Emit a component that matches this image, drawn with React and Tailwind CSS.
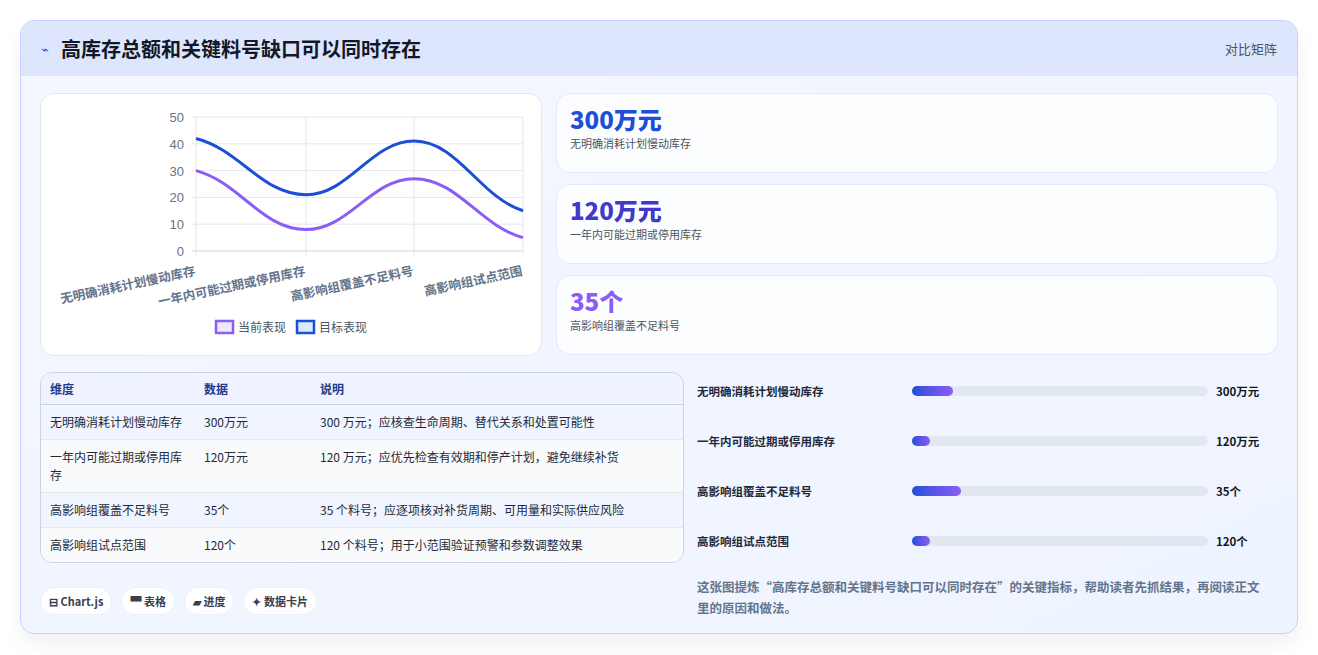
import React from "react";

const F = { fontFamily: '"Noto Sans CJK SC", "Noto Sans", sans-serif' };

function Chart() {
  const xs = [155, 265, 373, 482];
  const y0 = 156, top = 22;
  const yv = (v) => y0 - (v / 50) * (y0 - top);
  const path = (vals) => {
    const p = vals.map((v, i) => [xs[i], yv(v)]);
    let d = `M${p[0][0]},${p[0][1]}`;
    for (let i = 0; i < p.length - 1; i++) {
      const dx = (p[i + 1][0] - p[i][0]) * 0.4;
      const s0 = i === 0 ? (p[1][1] - p[0][1]) / 2 : 0;
      const s1 = i === p.length - 2 ? (p[i + 1][1] - p[i][1]) / 2 : 0;
      d += ` C${p[i][0] + dx},${p[i][1] + s0 * 0.4} ${p[i + 1][0] - dx},${p[i + 1][1] - s1 * 0.4} ${p[i + 1][0]},${p[i + 1][1]}`;
    }
    return d;
  };
  const labels = ["无明确消耗计划慢动库存", "一年内可能过期或停用库存", "高影响组覆盖不足料号", "高影响组试点范围"];
  return (
    <svg width="500" height="260" viewBox="0 0 500 260">
      {[0, 10, 20, 30, 40, 50].map((v) => (
        <g key={v}>
          <line x1={xs[0] - 4} x2={xs[3]} y1={yv(v)} y2={yv(v)} stroke={v === 0 ? "#cbd5e1" : "#e5e7eb"} />
          <text x={xs[0] - 12} y={yv(v) + 5} textAnchor="end" fontSize="13" fill="#6b7280" fontFamily="Liberation Sans, sans-serif">{v}</text>
        </g>
      ))}
      {xs.map((x) => (
        <line key={x} x1={x} x2={x} y1={yv(50)} y2={y0 + 6} stroke="#e5e7eb" />
      ))}
      <path d={path([42, 21, 41, 15])} fill="none" stroke="#1d4ed8" strokeWidth="3" />
      <path d={path([30, 8, 27, 5])} fill="none" stroke="#8b5cf6" strokeWidth="3" />
      {labels.map((l, i) => (
        <text key={i} x={xs[i]} y={y0 + 24} textAnchor="end" fontSize="12.5" fontWeight="600" fill="#64748b" transform={`rotate(-12 ${xs[i]} ${y0 + 24})`} style={F}>{l}</text>
      ))}
      <rect x="175" y="226" width="17" height="12" fill="#ede9fe" stroke="#8b5cf6" strokeWidth="2.5" />
      <text x="197" y="237" fontSize="12" fill="#4b5563" style={F}>当前表现</text>
      <rect x="256" y="226" width="17" height="12" fill="#dbeafe" stroke="#1d4ed8" strokeWidth="2.5" />
      <text x="278" y="237" fontSize="12" fill="#4b5563" style={F}>目标表现</text>
    </svg>
  );
}

const rows = [
  ["无明确消耗计划慢动库存", "300万元", "300 万元；应核查生命周期、替代关系和处置可能性"],
  ["一年内可能过期或停用库存", "120万元", "120 万元；应优先检查有效期和停产计划，避免继续补货"],
  ["高影响组覆盖不足料号", "35个", "35 个料号；应逐项核对补货周期、可用量和实际供应风险"],
  ["高影响组试点范围", "120个", "120 个料号；用于小范围验证预警和参数调整效果"],
];
const bars = [
  ["无明确消耗计划慢动库存", "300万元", 14],
  ["一年内可能过期或停用库存", "120万元", 6],
  ["高影响组覆盖不足料号", "35个", 16.5],
  ["高影响组试点范围", "120个", 6],
];

export default function App() {
  return (
    <div className="w-[1318px] h-[655px] bg-white pt-5 px-5" style={F}>
      <div className="w-[1278px] h-[614px] rounded-[14px] border border-[#c7d2fe] bg-gradient-to-br from-[#f5f7ff] to-[#eef4ff] overflow-hidden shadow-[0_10px_20px_rgba(0,0,0,0.06)]">
        <div className="h-[55px] bg-[#dde6fd] flex items-center justify-between px-5">
          <div className="flex items-center gap-3">
            <span className="text-[#2563eb] text-[13px]">⌁</span>
            <span className="text-[20px] font-bold text-[#111827]">高库存总额和关键料号缺口可以同时存在</span>
          </div>
          <span className="text-[13px] text-[#4b5563]">对比矩阵</span>
        </div>
        <div className="px-[19px] pt-[17px]">
          <div className="flex gap-[14px]">
            <div className="w-[502px] h-[263px] bg-white rounded-[14px] border border-[#e5e7eb] flex items-center justify-center">
              <Chart />
            </div>
            <div className="flex-1 flex flex-col gap-[11px]">
              {[["300万元", "text-[#1d4ed8]", "无明确消耗计划慢动库存"], ["120万元", "text-[#4338ca]", "一年内可能过期或停用库存"], ["35个", "text-[#8b5cf6]", "高影响组覆盖不足料号"]].map(([v, c, l]) => (
                <div key={v} className="h-[80px] bg-white/80 rounded-[14px] border border-[#e0e7ff] px-[13px] pt-[9px]">
                  <div className={`text-[24px] font-extrabold leading-[32px] ${c}`}>{v}</div>
                  <div className="text-[11px] text-[#4b5563]">{l}</div>
                </div>
              ))}
            </div>
          </div>
          <div className="flex gap-[13px] mt-[16px]">
            <div className="w-[644px]">
              <div className="rounded-[12px] border border-[#cbd5e1] overflow-hidden text-[12px] text-[#1f2937]">
                <div className="flex h-[32px] items-center bg-[#eef3ff] border-b border-[#cbd5e1] font-bold text-[#1e3a8a]">
                  <div className="w-[163px] pl-[9px]">维度</div><div className="w-[116px]">数据</div><div>说明</div>
                </div>
                {rows.map((r, i) => (
                  <div key={i} className={`flex py-[8px] border-b border-[#e5e7eb] last:border-b-0 leading-[18px] ${i % 2 ? "bg-[#f8fafc]" : "bg-[#f0f5ff]"}`}>
                    <div className="w-[163px] pl-[9px] pr-3">{r[0]}</div><div className="w-[116px]">{r[1]}</div><div>{r[2]}</div>
                  </div>
                ))}
              </div>
              <div className="flex gap-[9px] mt-[24px] text-[11px] font-semibold text-[#374151]">
                {["⊟ Chart.js", "▀ 表格", "▰ 进度", "✦ 数据卡片"].map((t) => (
                  <div key={t} className="h-[28px] px-[8px] flex items-center bg-white rounded-full border border-[#eef0f5]">{t}</div>
                ))}
              </div>
            </div>
            <div className="flex-1 pt-[7px]">
              {bars.map(([l, v, p]) => (
                <div key={l} className="h-[50px] flex items-start pt-[3px]">
                  <div className="w-[215px] text-[11.5px] font-semibold text-[#1f2937] leading-[18px]">{l}</div>
                  <div className="w-[296px] h-[10px] mt-[4px] rounded-full bg-[#e2e8f0]">
                    <div className="h-full rounded-full bg-gradient-to-r from-[#1d4ed8] to-[#8b5cf6]" style={{ width: `${p}%` }} />
                  </div>
                  <div className="ml-[8px] text-[11.5px] font-bold text-[#111827] leading-[18px]">{v}</div>
                </div>
              ))}
              <div className="-mt-[3px] text-[12.5px] font-semibold text-[#64748b] leading-[21px] pr-[10px]">
                这张图提炼“高库存总额和关键料号缺口可以同时存在”的关键指标，帮助读者先抓结果，再阅读正文里的原因和做法。
              </div>
            </div>
          </div>
        </div>
      </div>
    </div>
  );
}
